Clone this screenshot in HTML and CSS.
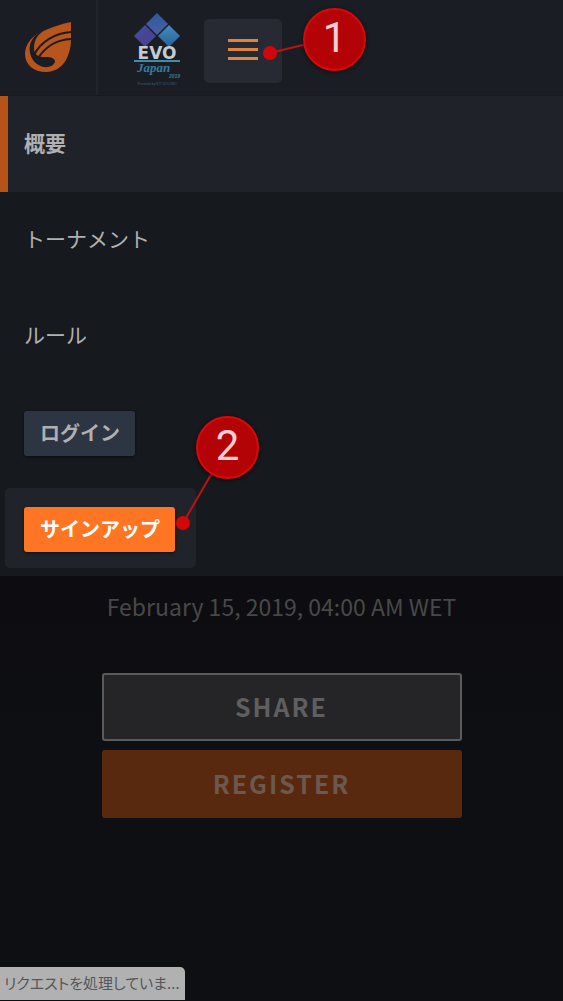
FILE: index.html
```html
<!DOCTYPE html>
<html lang="ja">
<head>
<meta charset="utf-8">
<meta name="viewport" content="width=device-width, initial-scale=1">
<title>EVO Japan 2019</title>
<link rel="stylesheet" href="styles.css">
</head>
<body>
<div class="page">
  <header class="header">
    <a class="brand" href="#" aria-label="Home">
      <svg class="brand-icon" viewBox="0 0 48 52" aria-hidden="true">
        <path class="brand-fill" d="M47 0C37 2 26 6 17 10C6 15 1 24 1 32C1 43 10 50 22 50C31 50 38 45 42 38C45 32 47 25 47 18Z"/>
        <path class="brand-cut" d="M21 8C10 11 4 21 6 31C8 41 17 46 24 45C29 44 31 41 31 39C30 35 25 35 20 35C15 35 10 33 10 26C10 18 14 12 21 8Z"/>
        <path class="brand-line" d="M10 33C17 19 32 11 47 10M14 36C23 23 33 18 47 17"/>
      </svg>
    </a>
    <a class="event" href="#" aria-label="EVO Japan 2019">
      <svg class="event-icon" viewBox="0 0 56 76" aria-hidden="true">
        <defs>
          <linearGradient id="top" x2="0" y2="1"><stop stop-color="#2b5b9b"/><stop offset="1" stop-color="#4a5fa5"/></linearGradient>
          <linearGradient id="left" x2="1" y2="1"><stop stop-color="#355b9f"/><stop offset=".5" stop-color="#4b4193"/><stop offset="1" stop-color="#3f4c98"/></linearGradient>
          <linearGradient id="right" x2="0" y2="1"><stop stop-color="#448cba"/><stop offset="1" stop-color="#28609b"/></linearGradient>
        </defs>
        <path fill="url(#top)" d="M28 3L39 14L28 25L17 14Z"/>
        <path fill="url(#left)" d="M16 15L27 26L16 37L5 26Z"/>
        <path fill="url(#right)" d="M40 15L51 26L40 37L29 26Z"/>
        <text class="evo" x="28" y="49" text-anchor="middle">EVO</text>
        <path stroke="#438ca8" stroke-width="2" d="M5 51H51"/>
        <text class="japan" x="8" y="62">Japan</text>
        <text class="year" x="40" y="68">2019</text>
        <text class="presented" x="28" y="75" text-anchor="middle">Presented by NTT DOCOMO</text>
      </svg>
    </a>
    <div class="toggle-wrap">
      <button class="toggle" type="button" aria-label="Menu" aria-expanded="true">
        <span class="bar"></span><span class="bar"></span><span class="bar"></span>
      </button>
      <div class="callout callout-one">
        <svg class="leader" viewBox="0 0 110 70" aria-hidden="true"><path d="M9 45L50 35"/><circle cx="9" cy="45" r="7"/></svg>
        <span class="badge">1</span>
      </div>
    </div>
  </header>
  <nav class="menu">
    <a class="item active" href="#">概要</a>
    <a class="item" href="#">トーナメント</a>
    <a class="item" href="#">ルール</a>
    <div class="item login-row"><button class="button login" type="button">ログイン</button></div>
    <div class="item signup-row">
      <div class="highlight">
        <button class="button signup" type="button">サインアップ</button>
        <div class="callout callout-two">
          <svg class="leader" viewBox="0 0 90 120" aria-hidden="true"><path d="M9 107L38 57"/><circle cx="9" cy="107" r="7"/></svg>
          <span class="badge">2</span>
        </div>
      </div>
    </div>
  </nav>
  <main class="hero">
    <p class="date">February 15, 2019, 04:00 AM WET</p>
    <div class="actions">
      <button class="action share" type="button">SHARE</button>
      <button class="action register" type="button">REGISTER</button>
    </div>
  </main>
  <div class="status" role="status">リクエストを処理していま...</div>
</div>
</body>
</html>
```
FILE: styles.css
```css
* { box-sizing: border-box; }

body {
  margin: 0;
  background: #0e0f13;
  color: #afb0b1;
  font-family: "Noto Sans CJK JP", sans-serif;
}

a { color: inherit; text-decoration: none; }

button { font-family: inherit; cursor: pointer; }

.page {
  display: flex;
  flex-direction: column;
  min-height: 100vh;
}

.header {
  display: flex;
  align-items: stretch;
  height: 96px;
  background: #1a1d24;
  border-bottom: 1px solid #17191f;
}

.brand {
  display: flex;
  align-items: center;
  padding: 0 24px;
  border-right: 2px solid #22242c;
}

.brand-icon { width: 48px; height: 52px; }
.brand-fill { fill: #b7551d; }
.brand-cut { fill: #1a1d24; }
.brand-line { fill: none; stroke: #1a1d24; stroke-width: 2; }

.event {
  display: flex;
  align-items: center;
  padding: 0 19px 0 31px;
}

.event-icon { width: 56px; height: 76px; }
.evo { fill: #c3ccd2; font: bold 17px "DejaVu Sans", sans-serif; }
.japan { fill: #357d9e; font: italic bold 13px "Liberation Serif", serif; }
.year { fill: #357d9e; font: italic bold 5px "Liberation Sans", sans-serif; }
.presented { fill: #386078; font: 3px "Liberation Sans", sans-serif; }

.toggle-wrap { position: relative; padding-top: 19px; }

.toggle {
  display: flex;
  flex-direction: column;
  align-items: center;
  justify-content: center;
  gap: 6px;
  width: 78px;
  height: 64px;
  padding: 0 0 4px;
  border: 0;
  border-radius: 5px;
  background: #272a32;
}

.bar { width: 30px; height: 3px; background: #df8544; }

.callout { position: absolute; pointer-events: none; }
.callout-one { left: 57px; top: 8px; width: 110px; height: 70px; }
.callout-two { left: 169px; top: -72px; width: 90px; height: 120px; }

.leader { display: block; width: 100%; height: 100%; }
.leader path { stroke: #bd1216; stroke-width: 2; }
.leader circle { fill: #d30709; }

.badge {
  position: absolute;
  display: flex;
  align-items: center;
  justify-content: center;
  width: 63px;
  height: 63px;
  padding-bottom: 4px;
  border: 2px solid #d9080b;
  border-radius: 50%;
  background: #b40306;
  box-shadow: 0 1px 4px #0009;
  color: #fbcfd1;
  font-family: Roboto, sans-serif;
  font-size: 42px;
  font-weight: 400;
  line-height: 1;
}

.callout-one .badge { left: 42px; top: 0; }
.callout-two .badge { left: 22px; top: 0; }

.menu { background: #16191d; }

.item {
  display: flex;
  align-items: center;
  height: 96px;
  padding: 0 24px 4px;
  font-size: 21px;
  line-height: 30px;
}

.active {
  padding-left: 16px;
  border-left: 8px solid #b5531b;
  background: #20222a;
  font-weight: 700;
}

.button {
  height: 45px;
  padding: 0 15px 1px 16px;
  border: 0;
  border-radius: 3px;
  box-shadow: 0 1px 3px #0008;
  font-size: 20px;
  font-weight: 700;
  line-height: 30px;
}

.login-row { padding: 2px 24px 0; }
.login { background: #2e3542; color: #afb0b1; }
.signup { background: #ff7524; color: #fff; }
.signup-row { padding: 0 5px; }

.highlight {
  position: relative;
  padding: 19px 21px 16px 19px;
  border-radius: 5px;
  background: #202329;
}

.highlight .button { display: block; }

.hero {
  flex: 1;
  display: flex;
  flex-direction: column;
  align-items: center;
  padding: 12px 24px 32px;
  background: linear-gradient(#0d0c10, #0e0f13 160px);
}

.date {
  margin: 0 0 49px;
  color: #484849;
  font-size: 23px;
  line-height: 36px;
}

.actions {
  display: flex;
  flex-direction: column;
  gap: 9px;
  width: 100%;
  max-width: 360px;
}

.action {
  height: 68px;
  padding: 0 0 3px;
  border: 0;
  border-radius: 3px;
  font-size: 25px;
  font-weight: 700;
  letter-spacing: 2px;
}

.share { border: 2px solid #5b5b5d; background: #252528; color: #5f5f61; }
.register { background: #59290f; color: #6b584e; }

.status {
  position: fixed;
  left: 0;
  bottom: 1px;
  height: 33px;
  padding: 0 0 0 4px;
  min-width: 185px;
  border-top-right-radius: 5px;
  background: #b1b1b1;
  color: #55565a;
  font-size: 15px;
  line-height: 32px;
  white-space: nowrap;
  font-feature-settings: "palt";
}
```
